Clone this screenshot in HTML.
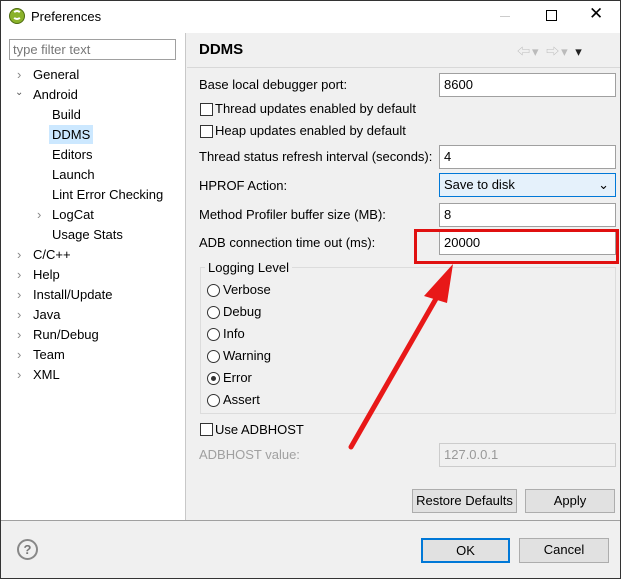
<!DOCTYPE html>
<html><head><style>
*{box-sizing:border-box;margin:0;padding:0}
body{width:621px;height:579px;overflow:hidden;font-family:"Liberation Sans","Noto Sans CJK SC",sans-serif;font-size:13px;color:#000;background:#fff;position:relative}
.win{position:absolute;left:0;top:0;width:621px;height:579px;border:1px solid #333;background:#f0f0f0}
.abs{position:absolute}
.title{left:0;top:0;width:619px;height:32px;background:#fff}
.left{left:0;top:32px;width:185px;height:487px;background:#fff;border-right:1px solid #c8c8c8}
.t{position:absolute;white-space:nowrap}
.inp{position:absolute;background:#fff;border:1px solid #a0a0a0;height:24px;padding:3px 4px}
.cb{position:absolute;width:13px;height:13px;border:1px solid #333;background:#fff}
.rd{position:absolute;width:13px;height:13px;border:1px solid #333;border-radius:50%;background:#fff}
.btn{position:absolute;background:#e1e1e1;border:1px solid #adadad;text-align:center;line-height:22px}
</style></head><body><div class="win">
<div class="abs title"></div>
<div class="abs" style="left:8px;top:7px;width:16px;height:16px;border-radius:50%;background:#8ab22a;border:1px solid #4d6b10"></div>
<div class="t" style="left:11px;top:9px;width:10px;height:10px;border:2px solid #fff;border-radius:50%;border-left-color:transparent;border-right-color:transparent"></div>
<div class="t" style="left:30px;top:8px">Preferences</div>
<div class="t" style="left:499px;top:15px;width:10px;height:1px;background:#ccc"></div>
<div class="t" style="left:545px;top:9px;width:11px;height:11px;border:1px solid #000"></div>
<div class="t" style="left:588px;top:3px;font-size:17px">✕</div>
<div class="abs left"></div>
<div class="inp" style="left:8px;top:38px;width:167px;height:21px;padding:2px 3px;color:#777">type filter text</div>
<div class="t" style="left:16px;top:66px;color:#888">›</div>
<div class="t" style="left:32px;top:66px">General</div>
<div class="t" style="left:14px;top:86px;color:#555;font-size:10px">⌄</div>
<div class="t" style="left:32px;top:86px">Android</div>
<div class="t" style="left:51px;top:106px">Build</div>
<div class="t" style="left:48px;top:124px;width:44px;height:19px;background:#cce8ff"></div>
<div class="t" style="left:51px;top:126px">DDMS</div>
<div class="t" style="left:51px;top:146px">Editors</div>
<div class="t" style="left:51px;top:166px">Launch</div>
<div class="t" style="left:51px;top:186px">Lint Error Checking</div>
<div class="t" style="left:36px;top:206px;color:#888">›</div>
<div class="t" style="left:51px;top:206px">LogCat</div>
<div class="t" style="left:51px;top:226px">Usage Stats</div>
<div class="t" style="left:16px;top:246px;color:#888">›</div><div class="t" style="left:32px;top:246px">C/C++</div>
<div class="t" style="left:16px;top:266px;color:#888">›</div><div class="t" style="left:32px;top:266px">Help</div>
<div class="t" style="left:16px;top:286px;color:#888">›</div><div class="t" style="left:32px;top:286px">Install/Update</div>
<div class="t" style="left:16px;top:306px;color:#888">›</div><div class="t" style="left:32px;top:306px">Java</div>
<div class="t" style="left:16px;top:326px;color:#888">›</div><div class="t" style="left:32px;top:326px">Run/Debug</div>
<div class="t" style="left:16px;top:346px;color:#888">›</div><div class="t" style="left:32px;top:346px">Team</div>
<div class="t" style="left:16px;top:366px;color:#888">›</div><div class="t" style="left:32px;top:366px">XML</div>

<div class="t" style="left:186px;top:66px;width:433px;height:1px;background:#d8d8d8"></div>
<div class="t" style="left:198px;top:40px;font-size:15px;font-weight:bold">DDMS</div>
<div class="t" style="left:516px;top:40px;color:#bbb;font-size:13px;letter-spacing:2px">⇦▾ ⇨▾ <span style="color:#222">▾</span></div>

<div class="t" style="left:198px;top:76px">Base local debugger port:</div>
<div class="inp" style="left:438px;top:72px;width:177px">8600</div>
<div class="cb" style="left:199px;top:102px"></div><div class="t" style="left:214px;top:100px">Thread updates enabled by default</div>
<div class="cb" style="left:199px;top:124px"></div><div class="t" style="left:214px;top:122px">Heap updates enabled by default</div>
<div class="t" style="left:198px;top:148px">Thread status refresh interval (seconds):</div>
<div class="inp" style="left:438px;top:144px;width:177px">4</div>
<div class="t" style="left:198px;top:177px">HPROF Action:</div>
<div class="inp" style="left:438px;top:172px;width:177px;background:#e5f1fb;border-color:#0078d7">Save to disk<span style="position:absolute;right:6px;top:3px">⌄</span></div>
<div class="t" style="left:198px;top:206px">Method Profiler buffer size (MB):</div>
<div class="inp" style="left:438px;top:202px;width:177px">8</div>
<div class="t" style="left:198px;top:234px">ADB connection time out (ms):</div>
<div class="inp" style="left:438px;top:230px;width:177px">20000</div>

<div class="t" style="left:199px;top:266px;width:416px;height:147px;border:1px solid #dcdcdc"></div>
<div class="t" style="left:204px;top:259px;background:#f0f0f0;padding:0 3px">Logging Level</div>
<div class="rd" style="left:206px;top:283px"></div><div class="t" style="left:222px;top:281px">Verbose</div>
<div class="rd" style="left:206px;top:305px"></div><div class="t" style="left:222px;top:303px">Debug</div>
<div class="rd" style="left:206px;top:327px"></div><div class="t" style="left:222px;top:325px">Info</div>
<div class="rd" style="left:206px;top:349px"></div><div class="t" style="left:222px;top:347px">Warning</div>
<div class="rd" style="left:206px;top:371px"><div style="position:absolute;left:3px;top:3px;width:5px;height:5px;border-radius:50%;background:#333"></div></div><div class="t" style="left:222px;top:369px">Error</div>
<div class="rd" style="left:206px;top:393px"></div><div class="t" style="left:222px;top:391px">Assert</div>
<div class="cb" style="left:199px;top:422px"></div><div class="t" style="left:214px;top:421px">Use ADBHOST</div>
<div class="t" style="left:198px;top:446px;color:#a0a0a0">ADBHOST value:</div>
<div class="inp" style="left:438px;top:442px;width:177px;background:#f0f0f0;border-color:#ccc;color:#999">127.0.0.1</div>

<div class="btn" style="left:411px;top:488px;width:105px;height:24px">Restore Defaults</div>
<div class="btn" style="left:524px;top:488px;width:90px;height:24px">Apply</div>
<div class="t" style="left:0;top:519px;width:619px;height:1px;background:#a0a0a0"></div>
<div class="t" style="left:16px;top:538px;width:21px;height:21px;border:2px solid #888;border-radius:50%;text-align:center;line-height:17px;color:#777;font-weight:bold;font-size:13px">?</div>
<div class="btn" style="left:420px;top:537px;width:89px;height:25px;border:2px solid #0078d7;line-height:21px">OK</div>
<div class="btn" style="left:518px;top:537px;width:90px;height:25px">Cancel</div>

<svg class="abs" style="left:0;top:0" width="621" height="579">
<rect x="414.5" y="229.5" width="202" height="32" fill="none" stroke="#e01010" stroke-width="3"/>
<line x1="350" y1="446" x2="436" y2="296" stroke="#e81818" stroke-width="5" stroke-linecap="round"/>
<polygon points="452,263 423,295 446,302" fill="#e81818"/>
</svg>
</div></body></html>
